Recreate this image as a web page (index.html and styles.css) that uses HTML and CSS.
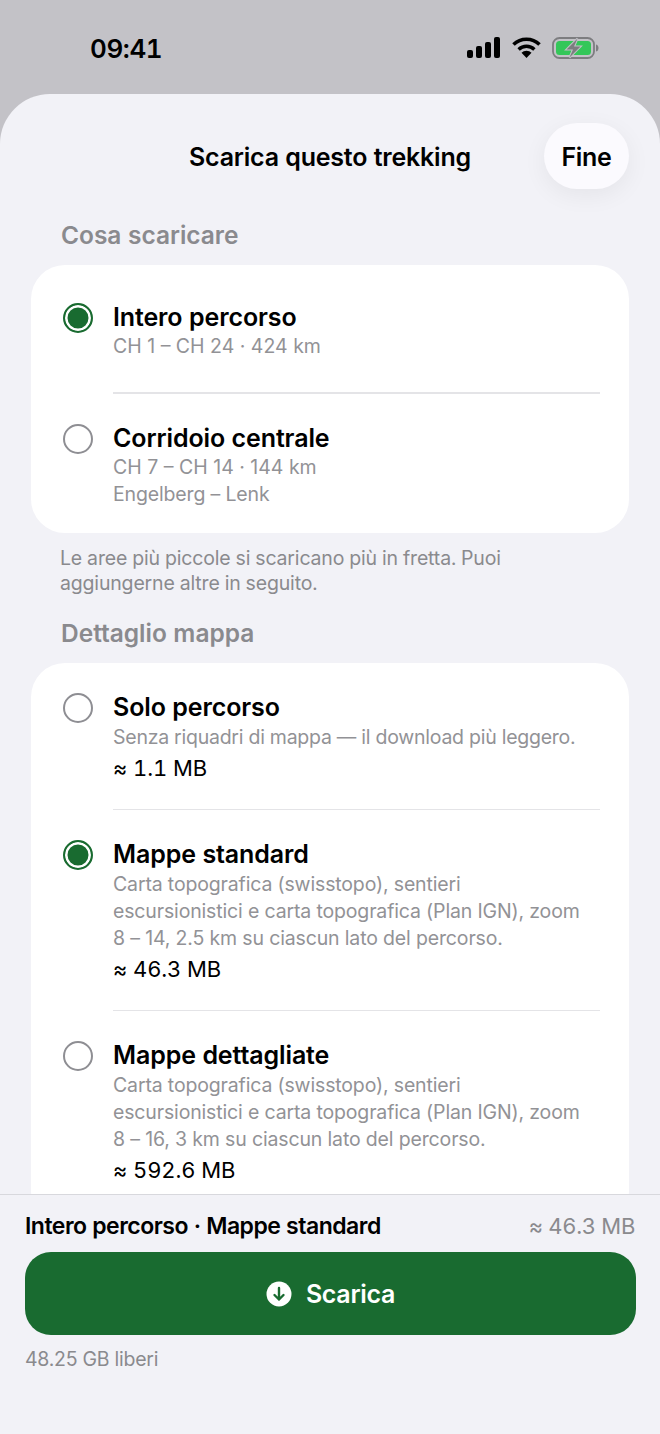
FILE: index.html
```html
<!DOCTYPE html>
<html lang="it">
<head>
<meta charset="utf-8">
<title>Scarica questo trekking</title>
<link rel="stylesheet" href="styles.css">
</head>
<body>
<div class="screen">
  <div class="status">
    <span class="time">09:41</span>
    <div class="status-icons">
      <svg class="signal" width="33" height="21" viewBox="0 0 33 21"><rect x="0" y="13" width="6" height="8" rx="2"/><rect x="9" y="9" width="6" height="12" rx="2"/><rect x="18" y="5" width="6" height="16" rx="2"/><rect x="27" y="0" width="6" height="21" rx="2"/></svg>
      <svg class="wifi" width="29" height="21" viewBox="0 0 29 21"><path d="M1.500 7.500a18.600 18.600 0 0 1 26 0" fill="none" stroke="#000" stroke-width="3.600"/><path d="M6.600 12.500a11.400 11.400 0 0 1 15.800 0" fill="none" stroke="#000" stroke-width="3.400"/><path d="M14.500 21l-5-5.200a7 7 0 0 1 10 0z"/></svg>
      <svg class="battery" width="47" height="22" viewBox="0 0 47 22"><rect x="1" y="1" width="41" height="20" rx="6.500" fill="none" stroke="#7d7d80" stroke-width="1.800"/><path d="M44 7.500c2 .5 2.500 2 2.500 3.500s-.5 3-2.500 3.500z" fill="#7d7d80"/><rect x="4" y="4" width="35" height="14" rx="3.500" fill="#34c759"/><path d="M25.500 1.500L14.500 12.500h6.500L17.500 20.500 28.500 9.500H22z" fill="#7d7d80" stroke="#c3c2c7" stroke-width="2" paint-order="stroke"/></svg>
    </div>
  </div>
  <div class="sheet">
    <header class="nav">
      <h1 class="nav-title">Scarica questo trekking</h1>
      <button class="done">Fine</button>
    </header>
    <main class="scroll">
      <h2 class="section section-first">Cosa scaricare</h2>
      <section class="card card-area">
        <div class="row row-first">
          <span class="radio radio-on"></span>
          <div class="row-body">
            <div class="row-title">Intero percorso</div>
            <div class="row-sub"><span class="route">CH 1 – CH 24 · 424 km</span></div>
          </div>
        </div>
        <div class="rule"></div>
        <div class="row">
          <span class="radio"></span>
          <div class="row-body">
            <div class="row-title">Corridoio centrale</div>
            <div class="row-sub"><span class="route">CH 7 – CH 14 · 144 km</span><br>Engelberg – Lenk</div>
          </div>
        </div>
      </section>
      <p class="note">Le aree più piccole si scaricano più in fretta. Puoi aggiungerne altre in seguito.</p>
      <h2 class="section">Dettaglio mappa</h2>
      <section class="card card-detail">
        <div class="row">
          <span class="radio"></span>
          <div class="row-body">
            <div class="row-title">Solo percorso</div>
            <div class="row-sub row-sub-tight">Senza riquadri di mappa — il download più leggero.</div>
            <div class="row-size">≈ 1.1 MB</div>
          </div>
        </div>
        <div class="rule"></div>
        <div class="row">
          <span class="radio radio-on"></span>
          <div class="row-body">
            <div class="row-title">Mappe standard</div>
            <div class="row-sub">Carta topografica (swisstopo), sentieri<br>escursionistici e carta topografica (Plan IGN), zoom<br>8 – 14, 2.5 km su ciascun lato del percorso.</div>
            <div class="row-size">≈ 46.3 MB</div>
          </div>
        </div>
        <div class="rule"></div>
        <div class="row">
          <span class="radio"></span>
          <div class="row-body">
            <div class="row-title">Mappe dettagliate</div>
            <div class="row-sub">Carta topografica (swisstopo), sentieri<br>escursionistici e carta topografica (Plan IGN), zoom<br>8 – 16, 3 km su ciascun lato del percorso.</div>
            <div class="row-size">≈ 592.6 MB</div>
          </div>
        </div>
      </section>
    </main>
    <footer class="footer">
      <div class="summary">
        <span class="summary-name">Intero percorso · Mappe standard</span>
        <span class="summary-size">≈ 46.3 MB</span>
      </div>
      <button class="download">
        <svg width="26" height="26" viewBox="0 0 26 26"><circle cx="13" cy="13" r="12.500" fill="#fff"/><path d="M13 7v11.500M8.500 14l4.500 4.500 4.500-4.500" fill="none" stroke="#196b30" stroke-width="2.400" stroke-linecap="round" stroke-linejoin="round"/></svg>
        <span>Scarica</span>
      </button>
      <div class="free">48.25 GB liberi</div>
    </footer>
  </div>
</div>
</body>
</html>
```
FILE: styles.css
```css
* { box-sizing: border-box; margin: 0; padding: 0; }
html, body { width: 660px; height: 1434px; overflow: hidden; }
body { font-family: Inter, "Liberation Sans", sans-serif; color: #000; background: #c3c2c7; font-variant-numeric: tabular-nums; }
.screen { display: flex; flex-direction: column; height: 1434px; }
.status { height: 94px; flex: none; display: flex; align-items: center; justify-content: space-between; padding: 4px 61px 0 90px; }
.time { font-size: 26px; font-weight: 600; letter-spacing: -0.4px; margin-top: -1px; }
.status-icons { display: flex; align-items: center; gap: 11.500px; margin-top: -3px; }
.sheet { flex: 1; min-height: 0; display: flex; flex-direction: column; background: #f2f2f7; border-radius: 50px 50px 0 0; }
.nav { position: relative; height: 95px; flex: none; display: flex; align-items: center; justify-content: center; padding-top: 30px; }
.nav-title { font-size: 25px; font-weight: 560; letter-spacing: -0.22px; line-height: 30px; }
.done { position: absolute; right: 31px; top: 29px; width: 85px; height: 66px; padding-top: 2px; border: 0; border-radius: 33px; background: #fbfafe; font: 560 25px Inter, sans-serif; letter-spacing: -0.3px; color: #000; box-shadow: 0 6px 24px rgba(0,0,0,.06); }
.scroll { flex: 1; min-height: 0; overflow: hidden; padding: 0 31px; }
.section { font-size: 24.500px; font-weight: 560; line-height: 30px; color: #8a8a8e; letter-spacing: -0.02px; padding-left: 30px; }
.section-first { margin-top: 31px; margin-bottom: 15px; }
.card { background: #fff; border-radius: 34px; }
.card-area { height: 268px; }
.card-detail { margin-top: 15px; padding-bottom: 40px; }
.row { display: flex; padding: 30px 29px 0 32px; gap: 20px; }
.row-first { padding-top: 38px; }
.radio { flex: none; width: 30px; height: 30px; border-radius: 50%; border: 2.500px solid #8e8e93; }
.radio-on { border: 2px solid #196b30; background: #196b30; box-shadow: inset 0 0 0 2.500px #fff; }
.row-body { flex: 1; min-width: 0; }
.row-title { font-size: 25px; font-weight: 560; line-height: 28px; letter-spacing: -0.12px; }
.row-sub { font-size: 19.500px; line-height: 27px; color: #929296; margin-top: 2px; letter-spacing: -0.15px; font-variant-numeric: normal; }
.row-sub-tight { letter-spacing: -0.25px; }
.route { letter-spacing: 0; }
.card-detail .row-sub { margin-top: 3px; }
.row-size { font-size: 22px; line-height: 28px; margin-top: 2.500px; letter-spacing: -0.1px; }
.rule { height: 1.500px; background: #e4e4e7; margin: 32px 29px 0 82px; }
.card-detail .rule { margin-top: 27px; }
.note { font-size: 19.500px; line-height: 25px; color: #8a8a8e; padding: 13px 29px 0; letter-spacing: -0.17px; }
.note + .section { margin-top: 22px; }
.footer { flex: none; height: 240px; border-top: 1px solid #d8d8dd; background: #f2f2f7; padding: 16px 24px 0 25px; }
.summary { display: flex; justify-content: space-between; align-items: center; height: 30px; padding-right: 1px; }
.summary-name { font-size: 23px; font-weight: 560; letter-spacing: -0.5px; }
.summary-size { font-size: 22px; color: #8a8a8e; letter-spacing: -0.3px; }
.download { width: 611px; height: 83px; margin-top: 11px; display: flex; align-items: center; justify-content: center; gap: 14px; background: #196b30; color: #fff; border: 0; border-radius: 26px; font: 560 25px Inter, sans-serif; letter-spacing: -0.3px; }
.free { font-size: 19.500px; line-height: 26px; color: #8a8a8e; margin-top: 11px; letter-spacing: -0.25px; font-variant-numeric: normal; }
```
